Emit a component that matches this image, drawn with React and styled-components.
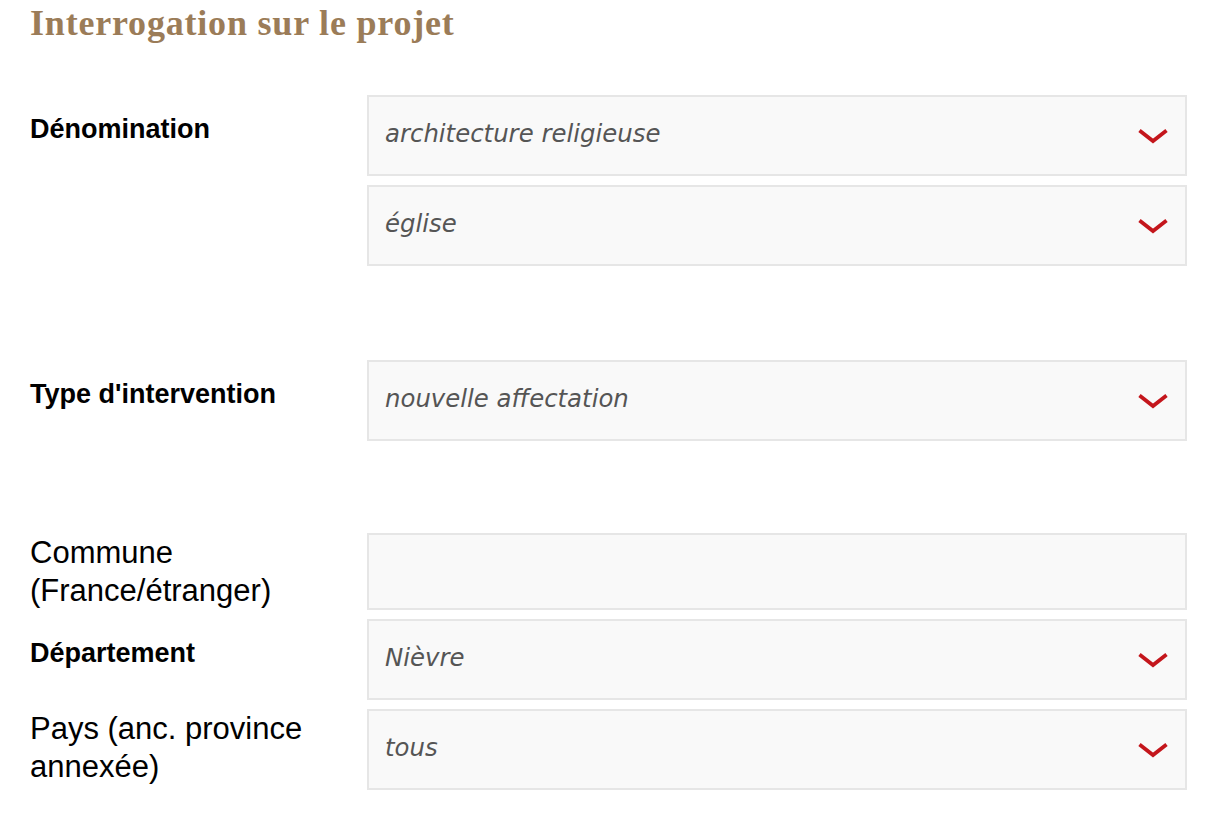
import React from "react";
import styled, {createGlobalStyle} from "styled-components";

const GlobalStyle = createGlobalStyle`
  body {
    margin: 0;
    background: #fff;
  }
`;

const Page = styled.div`
  padding: 0 35px 0 30px;
  width: 1157px;
`;

const Title = styled.h2`
  margin: 0;
  padding-top: 3px;
  height: 95px;
  box-sizing: border-box;
  font-family: "Liberation Serif", "Times New Roman", serif;
  font-weight: bold;
  font-size: 36px;
  line-height: 40px;
  letter-spacing: 0.8px;
  color: #9b7c58;
`;

const Section = styled.div`
  margin-bottom: ${p => p.$gap || 0}px;
`;

const Row = styled.div`
  display: grid;
  grid-template-columns: 337px 820px;
  margin-bottom: 9px;
`;

const Label = styled.div`
  font-family: "Liberation Sans", Arial, sans-serif;
  color: #000;
  font-size: ${p => (p.$strong ? 27 : 31)}px;
  font-weight: ${p => (p.$strong ? "bold" : "normal")};
  line-height: ${p => (p.$strong ? 31 : 38)}px;
  padding-top: ${p => (p.$strong ? 19 : 1)}px;
`;

const Fields = styled.div`
  display: flex;
  flex-direction: column;
  gap: 9px;
`;

const Box = styled.div`
  box-sizing: border-box;
  height: ${p => (p.$text ? 77 : 81)}px;
  border: 2px solid #e6e6e6;
  background: #f9f9f9;
  display: flex;
  align-items: center;
  justify-content: space-between;
  padding: 0 16px 5px 16px;
`;

const Value = styled.span`
  font-family: "DejaVu Sans", Verdana, sans-serif;
  font-style: italic;
  font-size: 24.4px;
  color: #555;
`;

const Chevron = styled.svg`
  width: 32px;
  height: 16px;
  margin-top: 5px;
  flex-shrink: 0;
`;

const Select = ({value}) => (
  <Box>
    <Value>{value}</Value>
    <Chevron viewBox="0 0 32 16">
      <path d="M2.5 2.5 L16 13 L29.5 2.5" fill="none" stroke="#c4161c" strokeWidth="3.8" strokeLinejoin="miter"/>
    </Chevron>
  </Box>
);

const App = () => {
  return (
    <>
      <GlobalStyle/>
      <Page>
        <Title>Interrogation sur le projet</Title>
        <Section $gap={94}>
          <Row>
            <Label $strong>Dénomination</Label>
            <Fields>
              <Select value="architecture religieuse"/>
              <Select value="église"/>
            </Fields>
          </Row>
        </Section>
        <Section $gap={92}>
          <Row>
            <Label $strong>Type d'intervention</Label>
            <Select value="nouvelle affectation"/>
          </Row>
        </Section>
        <Section>
          <Row>
            <Label>Commune<br/>(France/étranger)</Label>
            <Box $text/>
          </Row>
          <Row>
            <Label $strong>Département</Label>
            <Select value="Nièvre"/>
          </Row>
          <Row>
            <Label>Pays (anc. province annexée)</Label>
            <Select value="tous"/>
          </Row>
        </Section>
      </Page>
    </>
  );
};

export default App;
